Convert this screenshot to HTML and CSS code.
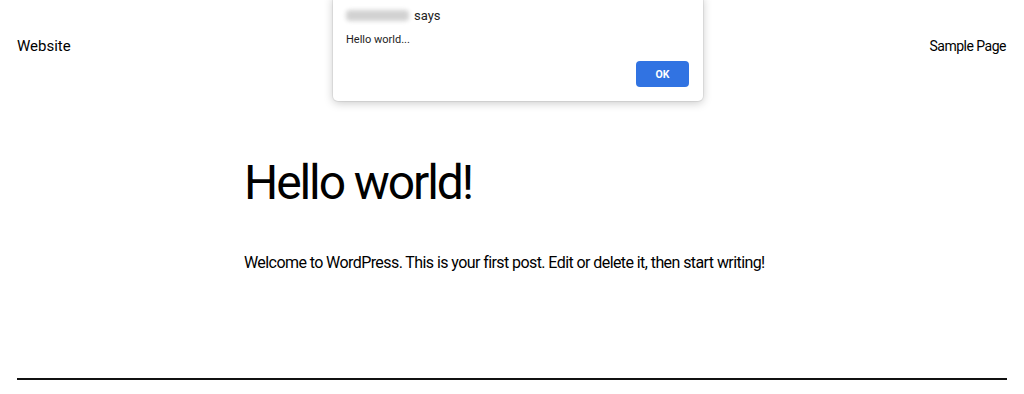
FILE: index.html
```html
<!DOCTYPE html>
<html>
<head>
<meta charset="utf-8">
<link rel="stylesheet" href="styles.css">
</head>
<body>
<header class="site-header">
  <a class="site-title">Website</a>
  <nav class="site-nav"><a>Sample Page</a></nav>
</header>
<main class="content">
  <h1 class="post-title">Hello world!</h1>
  <p class="post-text">Welcome to WordPress. This is your first post. Edit or delete it, then start writing!</p>
</main>
<hr class="rule">
<div class="dialog">
  <div class="dialog-head"><span class="blurred"></span><span class="says">says</span></div>
  <div class="dialog-msg">Hello world...</div>
  <div class="dialog-actions"><button class="ok">OK</button></div>
</div>
</body>
</html>
```
FILE: styles.css
```css
html, body {
  margin: 0;
  padding: 0;
  background: #fff;
  color: #000;
  font-family: Roboto, "Liberation Sans", Arial, sans-serif;
  height: 394px;
  overflow: hidden;
}
.site-header {
  display: flex;
  justify-content: space-between;
  align-items: center;
  padding: 0 18px 0 17px;
  height: 92px;
  font-size: 15px;
}
.site-title {
  color: #000;
}
.site-nav a {
  color: #000;
  font-size: 14px;
  letter-spacing: -0.5px;
}
.content {
  width: 536px;
  margin: 0 auto;
}
.post-title {
  margin: 63px 0 0 0;
  font-size: 48px;
  font-weight: 400;
  line-height: 56px;
  letter-spacing: -2.1px;
}
.post-text {
  margin: 41px 0 0 0;
  font-size: 16px;
  line-height: 22px;
  letter-spacing: -0.58px;
  white-space: nowrap;
}
.rule {
  margin: 104px 17px 0 17px;
  border: 0;
  height: 2px;
  background: #111;
}
.dialog {
  position: absolute;
  left: 333px;
  top: -4px;
  width: 370px;
  height: 105px;
  box-sizing: border-box;
  background: #fff;
  border-radius: 0 0 5px 5px;
  box-shadow: 0 2px 10px rgba(0,0,0,0.22), 0 0 0 1px rgba(0,0,0,0.06);
  padding: 10px 13px 0 13px;
  color: #222;
}
.dialog-head {
  display: flex;
  align-items: center;
  height: 18px;
  font-size: 13px;
}
.blurred {
  display: inline-block;
  width: 63px;
  height: 11px;
  margin-right: 5px;
  background: #d2d2d2;
  border-radius: 4px;
  filter: blur(2px);
}
.dialog-msg {
  margin-top: 9px;
  font-size: 11px;
}
.dialog-actions {
  display: flex;
  justify-content: flex-end;
  margin-top: 15px;
}
.ok {
  width: 53px;
  height: 26px;
  margin-right: 1px;
  border: 0;
  border-radius: 4px;
  background: #3173e2;
  color: #fff;
  font-family: Roboto, "Liberation Sans", Arial, sans-serif;
  font-weight: 700;
  font-size: 10.5px;
}
```
